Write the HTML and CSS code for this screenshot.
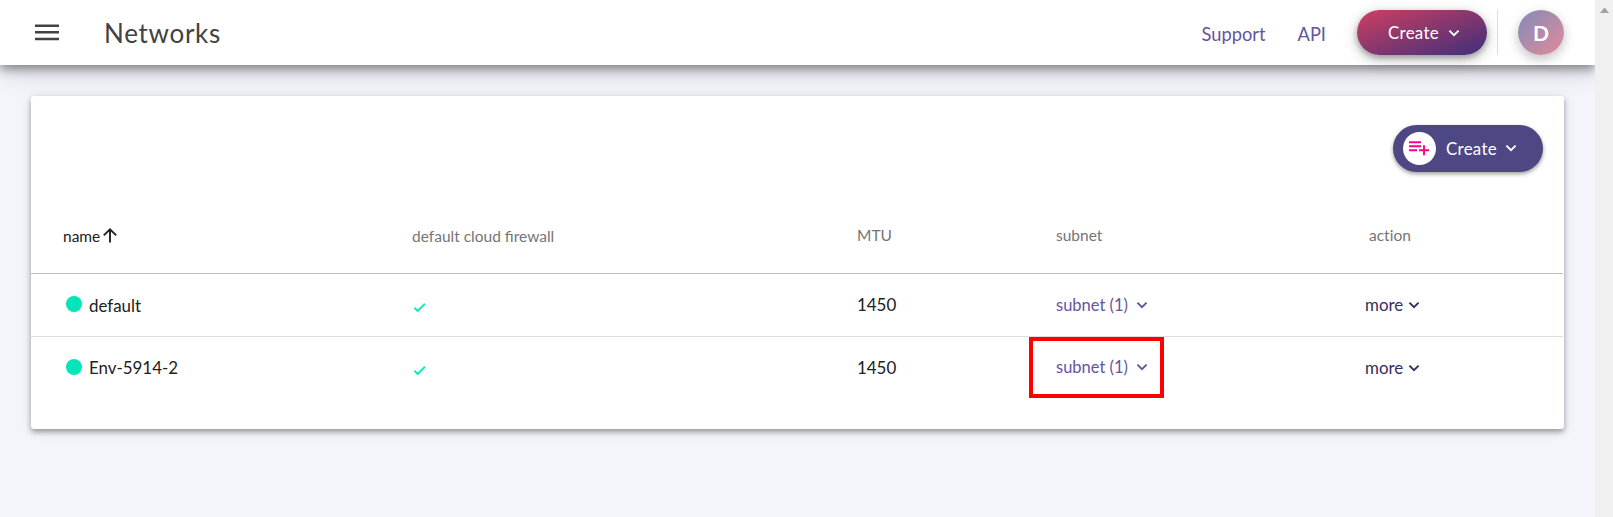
FILE: index.html
```html
<!DOCTYPE html>
<html lang="en">
<head>
<meta charset="utf-8">
<title>Networks</title>
<link rel="stylesheet" href="styles.css">
</head>
<body>
<svg class="defs" width="0" height="0">
  <symbol id="chevron" viewBox="0 0 12 8"><path d="M1.4 1.6 6 6.2l4.6-4.6" fill="none" stroke="currentColor" stroke-width="1.9"/></symbol>
  <symbol id="check" viewBox="0 0 24 24"><path d="M9 16.17 4.83 12l-1.42 1.41L9 19 21 7l-1.41-1.41z" fill="currentColor" stroke="currentColor" stroke-width="1.2"/></symbol>
</svg>
<div class="page">
  <header class="topbar">
    <button class="menu" aria-label="Menu"><svg width="24" height="17" viewBox="0 0 24 17"><path d="M0 1.7h24M0 8.300h24M0 15h24" stroke="#424242" stroke-width="2.600"/></svg></button>
    <h1 class="title">Networks</h1>
    <nav class="links"><a>Support</a><a>API</a></nav>
    <button class="create-main">Create<svg class="chev"><use href="#chevron"/></svg></button>
    <span class="divider"></span>
    <span class="avatar">D</span>
  </header>
  <main class="card">
    <div class="toolbar">
      <button class="create-net">
        <span class="disc"><svg width="20" height="15" viewBox="0 0 20 15"><path d="M0 1.2h12M0 5.2h12M0 9.2h8M10 9.2h10M15 4.2v10" fill="none" stroke="#ff0084" stroke-width="1.9"/></svg></span>
        Create<svg class="chev"><use href="#chevron"/></svg>
      </button>
    </div>
    <div class="row head">
      <span class="sorted">name<svg width="14" height="15" viewBox="0 0 14 15"><path d="M7 14.5V1.6M.8 7.4 7 1.4l6.200 6" fill="none" stroke="#212121" stroke-width="1.9"/></svg></span>
      <span class="low">default cloud firewall</span>
      <span>MTU</span>
      <span>subnet</span>
      <span class="action">action</span>
    </div>
    <div class="row">
      <span class="name"><i class="dot"></i>default</span>
      <span class="tick"><svg><use href="#check"/></svg></span>
      <span>1450</span>
      <span class="subnet">subnet (1)<svg class="chev"><use href="#chevron"/></svg></span>
      <span class="more">more<svg class="chev"><use href="#chevron"/></svg></span>
    </div>
    <div class="row last">
      <span class="name"><i class="dot"></i>Env-5914-2</span>
      <span class="tick"><svg><use href="#check"/></svg></span>
      <span>1450</span>
      <span class="subnet marked">subnet (1)<svg class="chev"><use href="#chevron"/></svg></span>
      <span class="more">more<svg class="chev"><use href="#chevron"/></svg></span>
    </div>
  </main>
</div>
<div class="scrollbar"><i class="up"></i></div>
</body>
</html>
```
FILE: styles.css
```css
* { box-sizing: border-box; }
body {
  margin: 0;
  height: 517px;
  display: flex;
  overflow: hidden;
  background: #f4f5fb;
  color: #212121;
  font: 16.900px/24px Lato, sans-serif;
}
button { border: 0; padding: 0; background: none; font: inherit; color: inherit; }
svg { display: block; flex: none; }
.defs { position: absolute; }
.page { flex: 1; overflow: hidden; }
.topbar {
  display: flex;
  align-items: center;
  height: 65px;
  padding: 0 31px 0 35px;
  background: #fff;
  box-shadow: 0 4px 10px rgba(0,0,0,.42), 0 10px 24px rgba(0,0,0,.12);
}
.title { flex: 1; margin: 0 0 0 45px; font-size: 26px; font-weight: 400; letter-spacing: .7px; line-height: 36px; color: #424242; }
.links { display: flex; gap: 32px; margin-right: 31px; padding-top: 2px; font-size: 18.300px; color: #6554a0; }
.chev { width: 12px; height: 8px; }
.create-main {
  display: flex;
  align-items: center;
  gap: 9px;
  width: 130px;
  height: 45px;
  padding-left: 31px;
  border-radius: 23px;
  color: #fff;
  letter-spacing: .3px;
  background: linear-gradient(160deg, #c73e63 5%, #45307a 95%);
  box-shadow: 0 3px 6px rgba(0,0,0,.3), 0 4px 16px rgba(0,0,0,.2);
}
.divider { width: 1px; height: 45px; margin: 0 20px 0 10px; background: #dcdcdc; }
.avatar {
  width: 46px;
  height: 45px;
  border-radius: 50%;
  background: linear-gradient(135deg, #8b8bb5 10%, #da8a9e 90%);
  box-shadow: 0 4px 12px rgba(0,0,0,.25);
  color: #fff;
  font-size: 21px;
  font-weight: 700;
  line-height: 45px;
  text-align: center;
}
.card {
  height: 333px;
  margin: 31px 31px 0;
  border-radius: 3px;
  background: #fff;
  box-shadow: 0 3px 5px rgba(0,0,0,.3), 0 2px 12px rgba(0,0,0,.14);
}
.toolbar { display: flex; justify-content: flex-end; height: 97px; padding: 29px 21px 0; }
.create-net {
  display: flex;
  align-items: center;
  width: 150px;
  height: 47px;
  padding-left: 10px;
  border-radius: 24px;
  background: #4d4884;
  box-shadow: 0 2px 4px rgba(0,0,0,.4);
  color: #fff;
  letter-spacing: .3px;
}
.create-net .chev { margin: 0 0 2px 8px; }
.disc { display: grid; place-items: center; width: 33px; height: 33px; margin-right: 10px; border-radius: 50%; background: #fff; }
.disc svg { margin-right: 1px; }
.row {
  display: grid;
  grid-template-columns: 349px 445px 199px 309px 1fr;
  align-items: center;
  height: 63px;
  margin-right: 1px;
  padding-left: 32px;
  border-bottom: 1px solid #dedede;
}
.head { height: 81px; padding-top: 4px; border-color: #bdbdbd; font-size: 15.500px; color: #757575; }
.last { height: 62px; border: 0; }
.sorted { display: flex; align-items: center; gap: 3px; padding-top: 1px; color: #212121; }
.sorted svg { margin-bottom: 1px; }
.low { padding-top: 2px; }
.action { padding-left: 4px; font-variant-ligatures: none; }
.name { display: flex; align-items: center; gap: 7px; padding: 1px 0 0 3px; }
.last .name { padding-top: 0; }
.dot { width: 16px; height: 16px; margin-bottom: 3px; border-radius: 50%; background: #00e6b8; }
.tick { padding-top: 5px; color: #00e6b8; }
.tick svg { width: 15px; height: 15px; }
.subnet, .more { display: flex; align-items: center; }
.subnet { gap: 8px; color: #6554a0; font-size: 16.500px; }
.marked { align-self: start; width: 135px; height: 61px; margin-left: -27px; padding: 0 0 1px 23px; border: 4px solid #f00; }
.more { gap: 5px; color: #372d63; }
.more .chev { margin-bottom: 1px; }
.scrollbar { width: 18px; background: #f0f0f0; padding: 8px 5px; }
.up { display: block; width: 9px; border: solid transparent; border-width: 0 4.500px 5px; border-bottom-color: #a3a3a3; }
```
